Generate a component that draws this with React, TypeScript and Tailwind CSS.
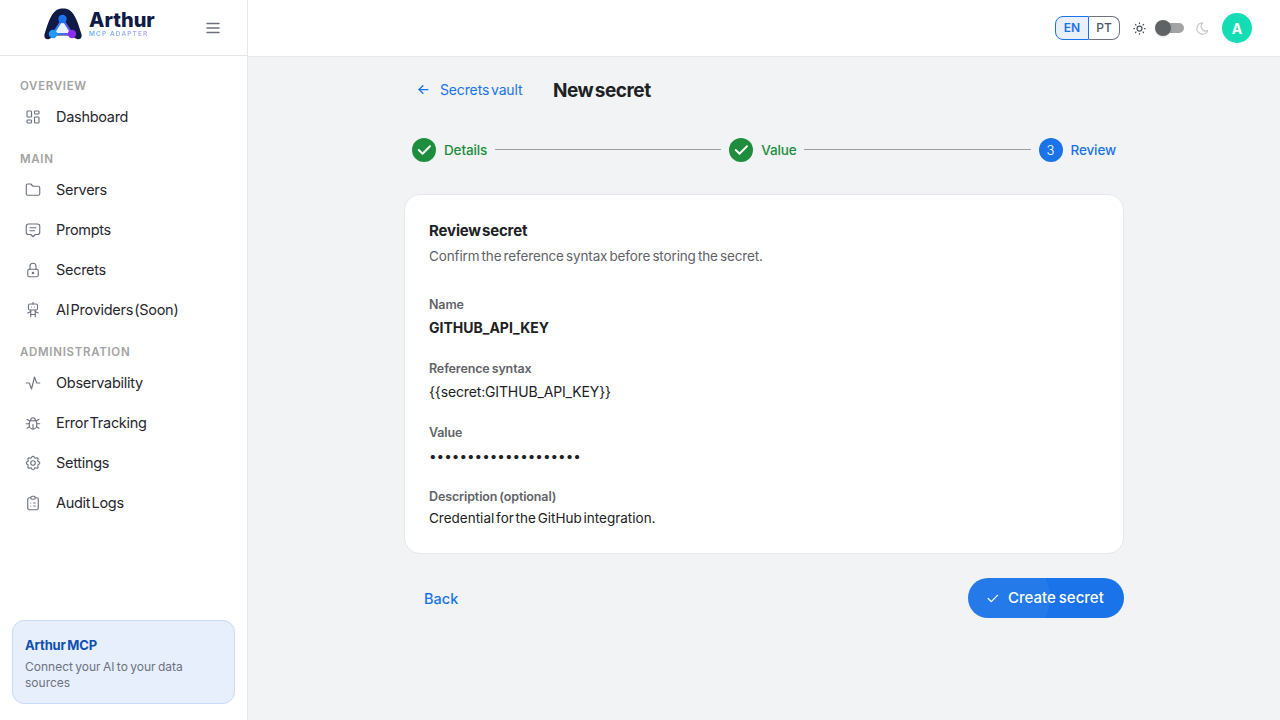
import { TbActivity, TbArrowLeft, TbBug, TbCheck, TbClipboardList, TbFolder, TbLayoutDashboard, TbLock, TbMenu2, TbMessage2, TbMoon, TbRobot, TbSettings, TbSun } from 'react-icons/tb';
import type { IconType } from 'react-icons';

const font = { fontFamily: 'Inter, sans-serif' };

interface NavGroup {
  title: string;
  items: { label: string; icon: IconType }[];
}

const groups: NavGroup[] = [
  { title: 'OVERVIEW', items: [{ label: 'Dashboard', icon: TbLayoutDashboard }] },
  {
    title: 'MAIN',
    items: [
      { label: 'Servers', icon: TbFolder },
      { label: 'Prompts', icon: TbMessage2 },
      { label: 'Secrets', icon: TbLock },
      { label: 'AI Providers (Soon)', icon: TbRobot },
    ],
  },
  {
    title: 'ADMINISTRATION',
    items: [
      { label: 'Observability', icon: TbActivity },
      { label: 'Error Tracking', icon: TbBug },
      { label: 'Settings', icon: TbSettings },
      { label: 'Audit Logs', icon: TbClipboardList },
    ],
  },
];

function Logo() {
  return (
    <div className="flex items-start gap-[7px]">
      <svg width="38" height="32" viewBox="0 0 38 32" fill="none">
        <defs>
          <linearGradient id="tri" x1="8" y1="26" x2="30" y2="26" gradientUnits="userSpaceOnUse">
            <stop stopColor="#1d8cf8" />
            <stop offset="1" stopColor="#6a4cf5" />
          </linearGradient>
        </defs>
        <path d="M0.6 26C3 19 6 6 13 1.8C16.5 0 21.5 0 25 1.8C32 6 35 19 37.4 26C38.6 30 35.5 32 33 31C30 30 28 27.5 24 27.5H14C10 27.5 8 30 5 31C2.5 32 -0.6 30 0.6 26Z" fill="#0f1a45" />
        <path d="M18.5 11L9 26H28Z" fill="#eaf2ff" stroke="url(#tri)" strokeWidth="2.2" strokeLinejoin="round" />
        <circle cx="18.5" cy="11" r="4.2" fill="#1a73f0" />
        <circle cx="9" cy="26" r="4.2" fill="#1d9bf8" />
        <circle cx="28" cy="26" r="4.2" fill="#8a2cf2" />
      </svg>
      <div className="flex flex-col pt-[2px]">
        <span className="text-[20px] font-extrabold leading-[20px] text-[#0f1a45]">Arthur</span>
        <span className="w-fit bg-gradient-to-r from-[#5ab0fa] to-[#b0a4f8] bg-clip-text text-[6.5px] font-semibold leading-[8px] tracking-[0.17em] text-transparent">MCP ADAPTER</span>
      </div>
    </div>
  );
}

function Sidebar() {
  return (
    <aside className="flex h-full w-[248px] shrink-0 flex-col border-r border-[#e5e7eb] bg-white">
      <div className="flex h-[56px] shrink-0 items-center border-b border-[#e5e7eb] pb-[8px] pl-[44px] pr-[25px]">
        <div className="flex-1"><Logo /></div>
        <TbMenu2 className="mt-[8px] text-[#6b7280]" size={18} />
      </div>
      <nav className="flex-1 pt-[22px]">
        {groups.map((group) => (
          <div key={group.title} className="mb-[14px]">
            <div className="px-5 text-[11.5px] font-semibold leading-4 tracking-[0.06em] text-[#a3a3a3]">{group.title}</div>
            <div className="mt-[3px]">
              {group.items.map((item) => (
                <div key={item.label} className="flex h-10 items-center pl-[24px] text-[14.5px] text-[#27272f]">
                  <item.icon size={18} strokeWidth={1.5} className="mr-[14px] text-[#6b7280]" />
                  <span className="tracking-[-0.02em] [word-spacing:-2.5px]">{item.label}</span>
                </div>
              ))}
            </div>
          </div>
        ))}
      </nav>
      <div className="mx-3 mb-4 h-[84px] rounded-xl border border-[#c9dafb] bg-[#e8effc] px-3 pt-4">
        <div className="text-[13px] font-bold leading-4 tracking-[-0.01em] text-[#0f4fb0] [word-spacing:-1.5px]">Arthur MCP</div>
        <div className="mt-[6px] text-[12px] leading-4 text-[#6b7280] [word-spacing:-1px]">Connect your AI to your data sources</div>
      </div>
    </aside>
  );
}

function TopBar() {
  return (
    <header className="flex h-[57px] shrink-0 items-center justify-end border-b border-[#e8e8ec] bg-white pr-[28px]">
      <div className="flex h-6 text-[12px] font-semibold">
        <div className="flex w-[34px] items-center justify-center rounded-l-lg border border-[#1a73e8] bg-[#e8f0fe] text-[#1a73e8]">EN</div>
        <div className="flex w-[31px] items-center justify-center rounded-r-lg border border-l-0 border-[#6b7280] font-medium text-[#4b5563]">PT</div>
      </div>
      <TbSun size={15} className="ml-[12px] text-[#4b5563]" />
      <div className="relative ml-[9px] h-[10px] w-[28px] rounded-full bg-[#a3a3a3]">
        <div className="absolute left-[-1px] top-[-3px] h-4 w-4 rounded-full bg-[#5f6368] shadow" />
      </div>
      <TbMoon size={15} className="ml-[11px] text-[#c8c8c8]" />
      <div className="ml-[12px] flex h-[30px] w-[30px] items-center justify-center rounded-full bg-[#14dcb4] text-[14px] font-bold text-white">A</div>
    </header>
  );
}

function Step({ label, done, number }: { label: string; done?: boolean; number?: number }) {
  return (
    <div className="flex items-center gap-2">
      <div className={`flex h-6 w-6 items-center justify-center rounded-full text-white ${done ? 'bg-[#1e8e3e]' : 'bg-[#1a73e8]'}`}>
        {done ? <TbCheck size={18} strokeWidth={2.5} /> : <span className="pt-px text-[13px] font-light">{number}</span>}
      </div>
      <span className={`text-[13.5px] font-medium tracking-[-0.01em] ${done ? 'text-[#1e8e3e]' : 'text-[#1a73e8]'}`}>{label}</span>
    </div>
  );
}

function Field({ label, children, gap }: { label: string; children: React.ReactNode; gap?: boolean }) {
  return (
    <div className={gap ? 'mt-[20px]' : ''}>
      <div className="text-[12.5px] font-semibold leading-5 tracking-[-0.01em] text-[#5f6368] [word-spacing:-1px]">{label}</div>
      <div className="mt-[2px]">{children}</div>
    </div>
  );
}

export default function App() {
  return (
    <div className="flex h-[720px] w-[1280px] overflow-hidden bg-[#f1f3f5]" style={font}>
      <Sidebar />
      <div className="flex min-w-0 flex-1 flex-col">
        <TopBar />
        <main className="mx-auto w-[720px]">
          <div className="flex h-[66px] items-center pl-[12px]">
            <div className="flex w-[137px] items-center pb-[2px] text-[#1a73e8]">
              <TbArrowLeft size={15} className="mr-[9px]" />
              <span className="text-[14px] tracking-[-0.01em] [word-spacing:-2px]">Secrets vault</span>
            </div>
            <h1 className="pt-[2px] text-[19px] font-bold tracking-[-0.025em] text-[#202124] [word-spacing:-2.5px]">New secret</h1>
          </div>
          <div className="mt-[15px] flex h-6 items-center pl-2">
            <Step label="Details" done />
            <div className="mx-2 mb-[1px] h-px flex-1 bg-[#9e9e9e]" />
            <Step label="Value" done />
            <div className="mx-2 mb-[1px] h-px flex-1 bg-[#9e9e9e]" />
            <Step label="Review" number={3} />
            <div className="w-2" />
          </div>
          <section className="mt-[32px] h-[360px] rounded-2xl border border-[#e8e8ec] bg-white px-6 pt-[26px]">
            <h2 className="text-[15px] font-bold leading-5 tracking-[-0.01em] text-[#202124] [word-spacing:-2.5px]">Review secret</h2>
            <p className="mt-[5px] text-[13.5px] leading-5 tracking-[-0.01em] text-[#5f6368] [word-spacing:-1.5px]">Confirm the reference syntax before storing the secret.</p>
            <div className="mt-[29px]">
              <Field label="Name">
                <div className="text-[14px] font-bold leading-[22px] text-[#202124]">GITHUB_API_KEY</div>
              </Field>
              <Field label="Reference syntax" gap>
                <div className="text-[14px] leading-[22px] tracking-[-0.01em] text-[#202124]">{'{{secret:GITHUB_API_KEY}}'}</div>
              </Field>
              <Field label="Value" gap>
                <div className="text-[13.5px] leading-[22px] text-[#202124]">••••••••••••••••••••</div>
              </Field>
              <Field label="Description (optional)" gap>
                <div className="text-[13.5px] leading-[18px] text-[#202124] [word-spacing:-2px]">Credential for the GitHub integration.</div>
              </Field>
            </div>
          </section>
          <div className="mt-6 flex items-center justify-between">
            <span className="pl-5 pt-px text-[14.5px] font-medium text-[#1a73e8]">Back</span>
            <div className="relative flex h-10 w-[156px] items-center overflow-hidden rounded-full bg-[#1a73e8] pl-[17px] text-white">
              <div className="absolute left-0 top-[-21px] h-[82px] w-[82px] rounded-full bg-white/5" />
              <TbCheck size={15} className="relative mr-[8px]" />
              <span className="relative pt-px text-[15px] font-medium [word-spacing:-1px]">Create secret</span>
            </div>
          </div>
        </main>
      </div>
    </div>
  );
}
